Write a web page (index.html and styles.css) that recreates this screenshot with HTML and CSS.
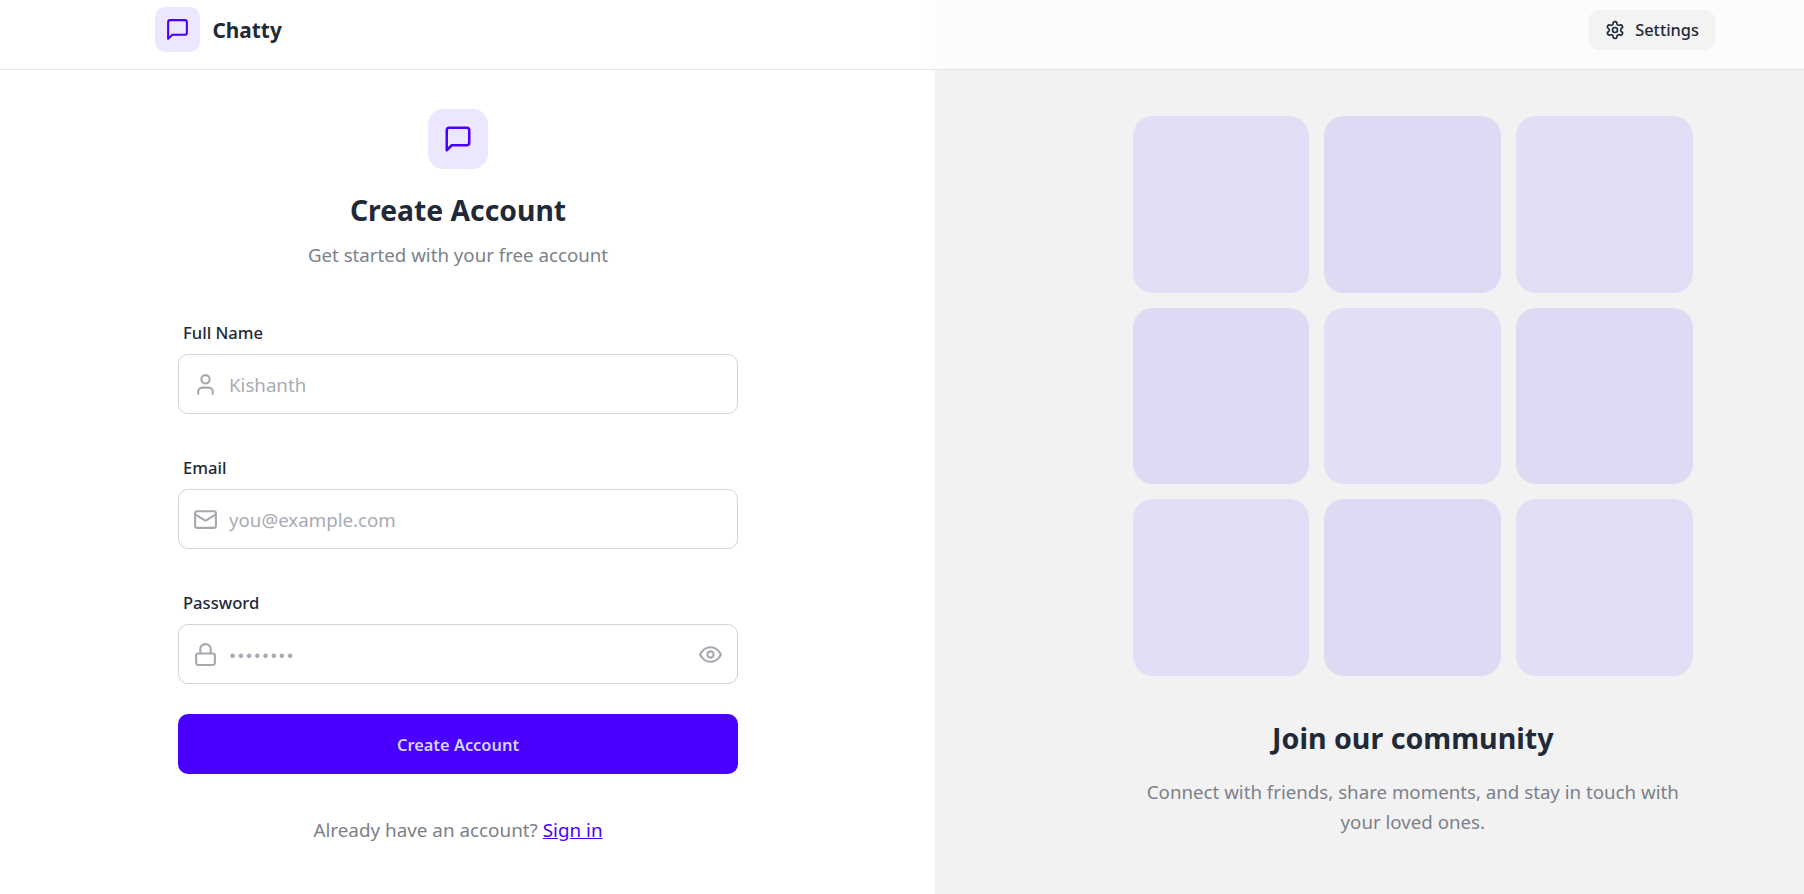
FILE: index.html
```html
<!DOCTYPE html>
<html lang="en">
<head>
<meta charset="utf-8">
<title>Chatty</title>
<link rel="stylesheet" href="styles.css">
</head>
<body>
<header class="topbar">
  <a class="brand" href="#">
    <span class="brand-mark">
      <svg class="icon icon-primary" viewBox="0 0 24 24"><path d="M21 15a2 2 0 0 1-2 2H7l-4 4V5a2 2 0 0 1 2-2h14a2 2 0 0 1 2 2z"/></svg>
    </span>
    <span class="brand-name">Chatty</span>
  </a>
  <a class="settings" href="#">
    <svg class="icon-small" viewBox="0 0 24 24"><path d="M12.22 2h-.44a2 2 0 0 0-2 2v.18a2 2 0 0 1-1 1.73l-.43.25a2 2 0 0 1-2 0l-.15-.08a2 2 0 0 0-2.73.73l-.22.38a2 2 0 0 0 .73 2.73l.15.1a2 2 0 0 1 1 1.72v.51a2 2 0 0 1-1 1.74l-.15.09a2 2 0 0 0-.73 2.73l.22.38a2 2 0 0 0 2.73.73l.15-.08a2 2 0 0 1 2 0l.43.25a2 2 0 0 1 1 1.73V20a2 2 0 0 0 2 2h.44a2 2 0 0 0 2-2v-.18a2 2 0 0 1 1-1.73l.43-.25a2 2 0 0 1 2 0l.15.08a2 2 0 0 0 2.73-.73l.22-.39a2 2 0 0 0-.73-2.73l-.15-.08a2 2 0 0 1-1-1.74v-.5a2 2 0 0 1 1-1.74l.15-.09a2 2 0 0 0 .73-2.73l-.22-.38a2 2 0 0 0-2.73-.73l-.15.08a2 2 0 0 1-2 0l-.43-.25a2 2 0 0 1-1-1.73V4a2 2 0 0 0-2-2z"/><circle cx="12" cy="12" r="3"/></svg>
    <span>Settings</span>
  </a>
</header>
<main class="layout">
  <section class="form-panel">
    <div class="form-head">
      <span class="head-mark">
        <svg class="icon-large icon-primary" viewBox="0 0 24 24"><path d="M21 15a2 2 0 0 1-2 2H7l-4 4V5a2 2 0 0 1 2-2h14a2 2 0 0 1 2 2z"/></svg>
      </span>
      <h1 class="title">Create Account</h1>
      <p class="muted subtitle">Get started with your free account</p>
    </div>
    <form class="form">
      <div class="field">
        <label class="label" for="name">Full Name</label>
        <div class="control">
          <svg class="icon icon-muted" viewBox="0 0 24 24"><path d="M19 21v-2a4 4 0 0 0-4-4H9a4 4 0 0 0-4 4v2"/><circle cx="12" cy="7" r="4"/></svg>
          <input id="name" class="input" type="text" placeholder="Kishanth">
        </div>
      </div>
      <div class="field">
        <label class="label" for="email">Email</label>
        <div class="control">
          <svg class="icon icon-muted" viewBox="0 0 24 24"><rect x="2" y="4" width="20" height="16" rx="2"/><path d="m22 7-8.97 5.7a1.94 1.94 0 0 1-2.06 0L2 7"/></svg>
          <input id="email" class="input" type="email" placeholder="you@example.com">
        </div>
      </div>
      <div class="field">
        <label class="label" for="password">Password</label>
        <div class="control">
          <svg class="icon icon-muted" viewBox="0 0 24 24"><rect x="3" y="11" width="18" height="11" rx="2" ry="2"/><path d="M7 11V7a5 5 0 0 1 10 0v4"/></svg>
          <input id="password" class="input input-secret" type="password" placeholder="••••••••">
          <svg class="icon icon-muted" viewBox="0 0 24 24"><path d="M2 12s3-7 10-7 10 7 10 7-3 7-10 7-10-7-10-7Z"/><circle cx="12" cy="12" r="3"/></svg>
        </div>
      </div>
      <button class="submit" type="button">Create Account</button>
    </form>
    <p class="muted signin">Already have an account? <a class="link" href="#">Sign in</a></p>
  </section>
  <section class="promo">
    <div class="tiles">
      <div class="tile"></div><div class="tile tile-deep"></div><div class="tile"></div>
      <div class="tile tile-deep"></div><div class="tile"></div><div class="tile tile-deep"></div>
      <div class="tile"></div><div class="tile tile-deep"></div><div class="tile"></div>
    </div>
    <h2 class="promo-title">Join our community</h2>
    <p class="muted promo-text">Connect with friends, share moments, and stay in touch with your loved ones.</p>
  </section>
</main>
</body>
</html>
```
FILE: styles.css
```css
* { box-sizing: border-box; }
html, body { margin: 0; height: 100%; }
body {
  display: flex;
  flex-direction: column;
  overflow: hidden;
  background: #fff;
  color: #1f2937;
  font-family: "Noto Sans", "Liberation Sans", sans-serif;
  font-size: 18.7px;
  line-height: 30px;
}
a { color: inherit; text-decoration: none; }
svg { fill: none; stroke: currentColor; stroke-width: 2; stroke-linecap: round; stroke-linejoin: round; flex: none; }
.icon { width: 25px; height: 25px; }
.icon-small { width: 20px; height: 20px; }
.icon-large { width: 30px; height: 30px; }
.icon-primary { color: #4a00ff; }
.icon-muted { color: #a5a9af; }

.topbar {
  flex: none;
  height: 70px;
  display: flex;
  align-items: center;
  justify-content: space-between;
  padding: 0 89px 10px 155px;
  border-bottom: 1px solid #e4e5e6;
  background: linear-gradient(90deg, #fff 925px, #fcfcfc 945px);
}
.brand { display: flex; align-items: center; gap: 12.5px; }
.brand-mark {
  width: 45px; height: 45px;
  display: flex; align-items: center; justify-content: center;
  border-radius: 10px;
  background: #ede6ff;
}
.brand-name { font-size: 20.8px; font-weight: 700; }
.settings {
  height: 40px;
  display: flex; align-items: center; gap: 10px;
  padding: 0 16px;
  border-radius: 10px;
  background: #f3f3f3;
  font-size: 16.4px;
  font-weight: 500;
}

.layout { flex: 1; display: grid; grid-template-columns: 935px 869px; min-height: 0; }
.form-panel { padding: 39px 0 0 178px; }
.form-head { width: 560px; display: flex; flex-direction: column; align-items: center; }
.head-mark {
  width: 60px; height: 60px;
  display: flex; align-items: center; justify-content: center;
  border-radius: 15px;
  background: #ede6ff;
}
.title { margin: 21px 0 0; font-size: 28.3px; line-height: 40px; font-weight: 700; }
.muted { color: #7b818a; }
.subtitle { margin: 10px 0 0; }
.form { width: 560px; margin-top: 39px; display: flex; flex-direction: column; gap: 30px; }
.label { display: block; height: 45px; padding: 11px 5px 0; font-size: 16.6px; line-height: 25px; font-weight: 500; }
.control {
  height: 60px;
  display: flex; align-items: center; gap: 11px;
  padding: 0 14px;
  border: 1px solid #d2d4d7;
  border-radius: 10px;
  background: #fff;
}
.input {
  flex: 1; min-width: 0;
  border: 0; outline: 0; padding: 2px 0 0;
  background: none;
  font: inherit;
  color: inherit;
}
.input-secret { letter-spacing: 1.2px; }
.input::placeholder { color: #a6abb3; opacity: 1; }
.submit {
  height: 60px;
  border: 0;
  border-radius: 10px;
  padding: 1px 0 0;
  background: #4a00ff;
  color: #d2d6ff;
  font: inherit;
  font-size: 16.4px;
  font-weight: 600;
}
.signin { width: 560px; margin: 41px 0 0; text-align: center; font-size: 18.85px; }
.link { color: #4a00ff; text-decoration: underline; }

.promo { background: #f2f2f2; padding: 46px 0 0 197.8px; }
.tiles { width: 560px; display: grid; grid-template-columns: repeat(3, 1fr); gap: 15px; }
.tile { aspect-ratio: 1; border-radius: 20px; background: #e3ddf5; }
.tile-deep { background: #e0d9f4; }
.promo-title { width: 560px; margin: 42px 0 0; text-align: center; font-size: 28.6px; line-height: 40px; font-weight: 700; }
.promo-text { width: 560px; margin: 19px 0 0; text-align: center; }
```
